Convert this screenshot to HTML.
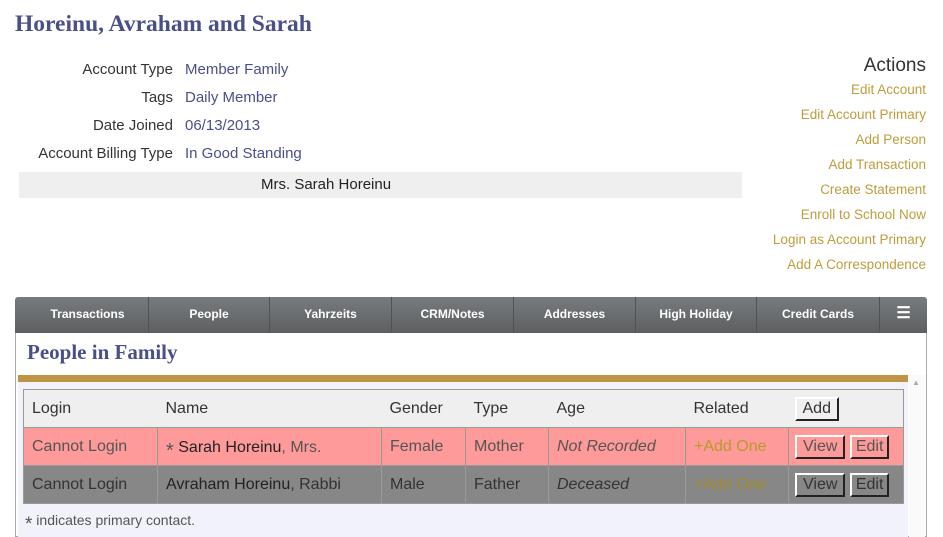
<!DOCTYPE html>
<html><head><style>
*{margin:0;padding:0;box-sizing:border-box}
body{width:943px;height:537px;overflow:hidden;background:#fff;font-family:"Liberation Sans",sans-serif;position:relative;color:#333}
.abs{position:absolute}
h1{position:absolute;left:15px;top:11px;font-family:"Liberation Serif",serif;font-size:23.5px;font-weight:bold;color:#4a4f8a}
.lbl{position:absolute;right:770px;font-size:15px;color:#333;white-space:nowrap}
.val{position:absolute;left:185px;font-size:15px;color:#4a4f8a;white-space:nowrap}
.act{position:absolute;right:17px;font-size:13.5px;color:#bf9c3c;white-space:nowrap}
.nav{position:absolute;left:15px;top:297px;width:912px;height:36px;background:linear-gradient(#777b7d,#5c6062);border-radius:3px 3px 0 0}
.tab{position:absolute;top:0;height:36px;line-height:34px;text-align:center;color:#fff;font-weight:bold;font-size:12px;border-right:1px solid #4f5355}
table{position:absolute;left:23px;top:389px;width:881px;border-collapse:collapse;font-size:16px}
td{height:38px;padding:0 8px;border:1px solid #9a9a9a;white-space:nowrap}
tr.h td{background:#efefef;border-left:none;border-right:none;color:#333}
tr.h td:first-child{border-left:1px solid #9a9a9a}
tr.h td:last-child{border-right:1px solid #9a9a9a}
tr.r1 td{background:#ff9a9a;color:#555}
tr.r2 td{background:#878787;color:#333}
.btn{display:inline-block;border:2px solid;border-color:#fff #222 #222 #fff;padding:1px 6px;font-size:16px}
</style></head><body>
<h1>Horeinu, Avraham and Sarah</h1>
<div class="lbl" style="top:61px">Account Type</div><div class="val" style="top:61px">Member Family</div>
<div class="lbl" style="top:89px">Tags</div><div class="val" style="top:89px">Daily Member</div>
<div class="lbl" style="top:117px">Date Joined</div><div class="val" style="top:117px">06/13/2013</div>
<div class="lbl" style="top:145px">Account Billing Type</div><div class="val" style="top:145px">In Good Standing</div>
<div class="abs" style="left:19px;top:172px;width:723px;height:26px;background:#efefef;font-size:15px;line-height:26px;color:#222"><span style="position:absolute;left:242px">Mrs. Sarah Horeinu</span></div>
<div class="abs" style="right:17px;top:55px;font-size:19px;color:#333">Actions</div>
<div class="act" style="top:82px">Edit Account</div>
<div class="act" style="top:107px">Edit Account Primary</div>
<div class="act" style="top:132px">Add Person</div>
<div class="act" style="top:157px">Add Transaction</div>
<div class="act" style="top:182px">Create Statement</div>
<div class="act" style="top:207px">Enroll to School Now</div>
<div class="act" style="top:232px">Login as Account Primary</div>
<div class="act" style="top:257px">Add A Correspondence</div>
<div class="nav">
<div class="tab" style="left:0;width:134px;padding-left:12px">Transactions</div>
<div class="tab" style="left:134px;width:121px">People</div>
<div class="tab" style="left:255px;width:122px">Yahrzeits</div>
<div class="tab" style="left:377px;width:122px">CRM/Notes</div>
<div class="tab" style="left:499px;width:122px">Addresses</div>
<div class="tab" style="left:621px;width:121px">High Holiday</div>
<div class="tab" style="left:742px;width:123px">Credit Cards</div>
<div class="tab" style="left:865px;width:47px;border:none;font-size:16px">&#9776;</div>
</div>
<div class="abs" style="left:15px;top:333px;width:912px;height:204px;border:1px solid #aaa;border-top:none;background:#fff"></div>
<div class="abs" style="left:27px;top:340px;font-family:'Liberation Serif',serif;font-size:21px;font-weight:bold;color:#4a4f8a">People in Family</div>
<div class="abs" style="left:18px;top:375px;width:890px;height:7px;background:#bf9444"></div>
<div class="abs" style="left:18px;top:382px;width:890px;height:155px;background:#f2f2fa"></div>
<div class="abs" style="left:909px;top:375px;width:16px;height:162px;background:#fafafa"></div>
<div class="abs" style="left:912px;top:378px;font-size:8px;color:#aaa">&#9650;</div>
<table>
<tr class="h"><td style="width:134px">Login</td><td style="width:224px">Name</td><td style="width:84px">Gender</td><td style="width:83px">Type</td><td style="width:137px">Age</td><td style="width:103px">Related</td><td style="padding-left:6px"><span class="btn">Add</span></td></tr>
<tr class="r1"><td>Cannot Login</td><td><span style="font-size:20px;position:relative;top:5px">*</span> <span style="color:#222">Sarah Horeinu</span>, Mrs.</td><td>Female</td><td>Mother</td><td><i>Not Recorded</i></td><td style="color:#b89a2a">+Add One</td><td style="padding:0 6px"><span class="btn">View</span> <span class="btn" style="padding:1px 4px">Edit</span></td></tr>
<tr class="r2"><td>Cannot Login</td><td><span style="color:#222">Avraham Horeinu</span>, Rabbi</td><td>Male</td><td>Father</td><td><i>Deceased</i></td><td style="color:#a38a2a">+Add One</td><td style="padding:0 6px"><span class="btn">View</span> <span class="btn" style="padding:1px 4px">Edit</span></td></tr>
</table>
<div class="abs" style="left:25px;top:509px;font-size:14px;color:#555"><span style="font-size:19px;position:relative;top:5px">*</span> indicates primary contact.</div>
</body></html>
